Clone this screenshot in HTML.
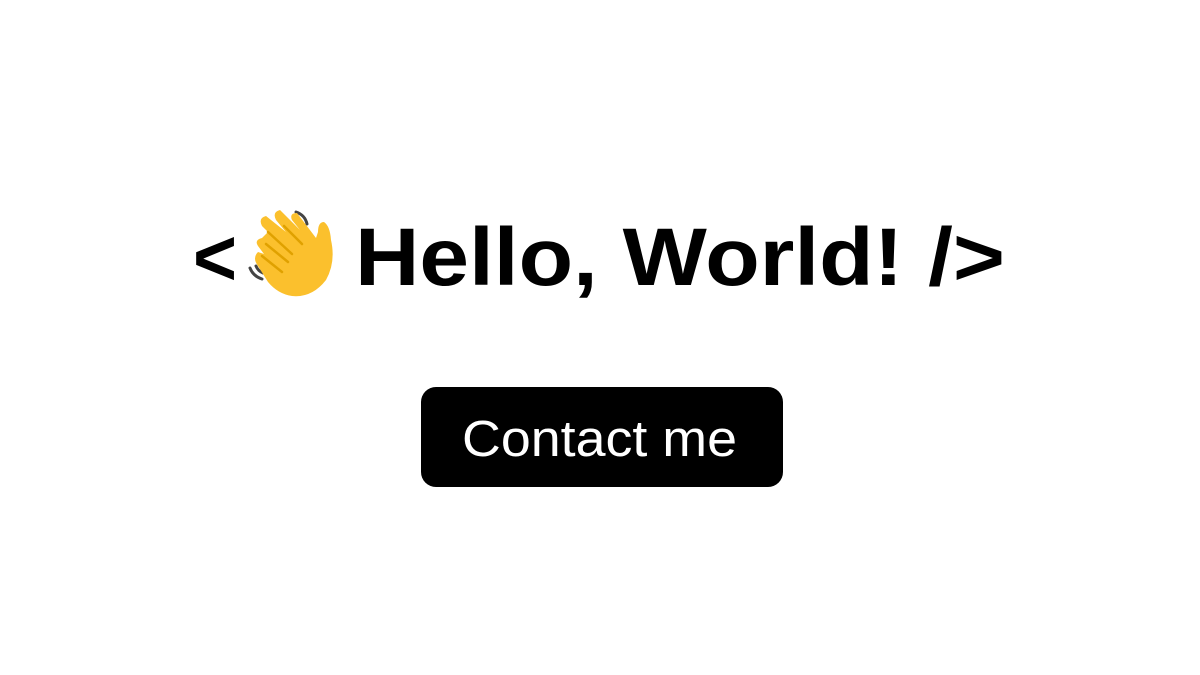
<!DOCTYPE html>
<html><head><meta charset="utf-8"><style>
html,body{margin:0;padding:0;background:#fff;width:1200px;height:675px;overflow:hidden}
</style></head><body>
<svg width="1200" height="675" viewBox="0 0 1200 675" xmlns="http://www.w3.org/2000/svg">
<text x="193" y="285" font-family="Liberation Sans, sans-serif" font-weight="bold" font-size="80" fill="#000" textLength="44" lengthAdjust="spacingAndGlyphs">&lt;</text>
<text x="355" y="285" font-family="Liberation Sans, sans-serif" font-weight="bold" font-size="82" fill="#000" textLength="650" lengthAdjust="spacingAndGlyphs">Hello, World! /&gt;</text>
<g>
<path d="M296 212 q9 3 11 12" stroke="#444" stroke-width="3" fill="none" stroke-linecap="round"/>
<path d="M297 220 q5 2 6 7" stroke="#444" stroke-width="3" fill="none" stroke-linecap="round"/>
<path d="M250 268 q3 8 12 11" stroke="#444" stroke-width="3" fill="none" stroke-linecap="round"/>
<path d="M256 266 q2 5 7 7" stroke="#444" stroke-width="3" fill="none" stroke-linecap="round"/>
<path d="M262 238 L268 232 L262 226 Q258 218 266 216 L286 232 L276 220 Q272 212 280 210 L300 230 L292 220 Q289 213 297 213 L316 238 L318 232 Q318 222 324 222 Q330 226 331 240 Q336 262 326 280 Q312 298 292 296 Q278 294 268 282 L258 266 Q252 258 258 252 L264 254 L258 246 Q254 240 262 238 Z" fill="#fbc02d"/>
<path d="M268 232 L292 254 M266 244 L288 262 M284 226 L302 244 M262 256 L282 272" stroke="#e0a100" stroke-width="2.5" fill="none" stroke-linecap="round"/>
</g>
<rect x="421" y="387" width="362" height="100" rx="15" fill="#000"/>
<text x="462" y="456" font-family="Liberation Sans, sans-serif" font-size="51" fill="#fff" textLength="275" lengthAdjust="spacingAndGlyphs">Contact me</text>
</svg>
</body></html>
